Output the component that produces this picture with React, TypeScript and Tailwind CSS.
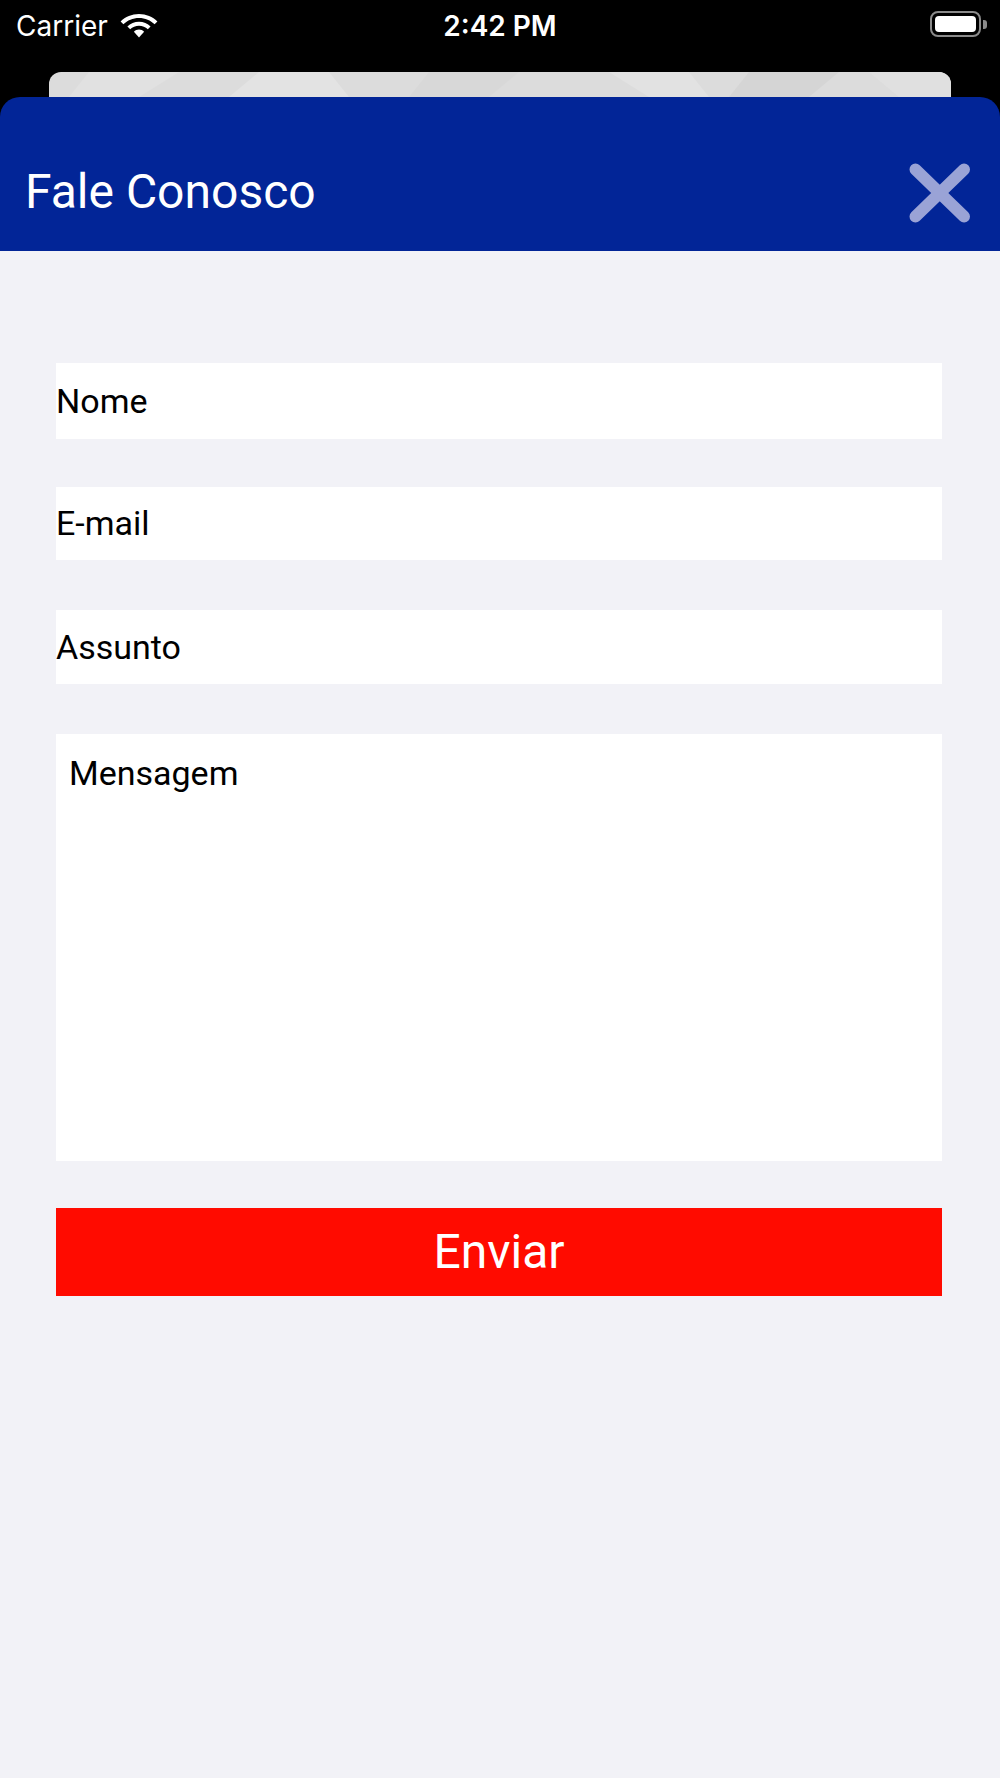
import React from 'react';

const WifiIcon = () => (
  <svg width="38" height="24" viewBox="0 0 38 24" fill="white">
    <path d="M19 0C11.8 0 5.3 2.8 0.6 7.4L3.4 10.2C7.4 6.3 12.9 3.9 19 3.9S30.6 6.3 34.6 10.2L37.4 7.4C32.7 2.8 26.2 0 19 0Z" />
    <path d="M19 7.8C14.5 7.8 10.4 9.6 7.4 12.5L10.2 15.3C12.5 13.1 15.6 11.7 19 11.7S25.5 13.1 27.8 15.3L30.6 12.5C27.6 9.6 23.5 7.8 19 7.8Z" />
    <path d="M19 15.6C17 15.6 15.2 16.4 13.9 17.7L19 23.5L24.1 17.7C22.8 16.4 21 15.6 19 15.6Z" />
  </svg>
);

const Battery = () => (
  <div className="flex items-center">
    <div className="w-[51px] h-[26px] rounded-[8px] border-[2px] border-[#8a8a8a] p-[3px]">
      <div className="w-full h-full rounded-[4px] bg-white" />
    </div>
    <div className="w-[4px] h-[9px] rounded-r-[3px] bg-[#8a8a8a] ml-[2px]" />
  </div>
);

const CloseIcon = () => (
  <svg width="62" height="60" viewBox="0 0 62 60" aria-label="Fechar">
    <g stroke="#9aa3d6" strokeWidth="12" strokeLinecap="round">
      <line x1="6.5" y1="6.5" x2="55" y2="53.5" />
      <line x1="55" y1="6.5" x2="6.5" y2="53.5" />
    </g>
  </svg>
);

const CardTexture = () => (
  <svg className="w-full h-full" viewBox="0 0 902 25" preserveAspectRatio="none">
    <rect width="902" height="25" fill="#dcdcdc" />
    <polygon points="40,0 130,0 90,25 20,25" fill="#e1e1e1" />
    <polygon points="210,0 280,0 300,25 180,25" fill="#e3e3e3" />
    <polygon points="380,0 470,0 440,25 360,25" fill="#d8d8d8" />
    <polygon points="560,0 640,0 660,25 600,25" fill="#e2e2e2" />
    <polygon points="700,0 790,0 760,25 680,25" fill="#d5d5d5" />
    <polygon points="820,0 902,0 902,25 850,25" fill="#e0e0e0" />
  </svg>
);

const fields = [
  { label: 'Nome', h: 'h-[76px]', mt: 'mt-0' },
  { label: 'E-mail', h: 'h-[73px]', mt: 'mt-[48px]' },
  { label: 'Assunto', h: 'h-[74px]', mt: 'mt-[50px]' },
];

export default function App() {
  return (
    <div className="w-[1000px] h-[1778px] bg-black flex flex-col overflow-hidden">
      {/* status bar */}
      <div className="relative h-[72px] shrink-0 text-white font-['Inter',sans-serif]">
        <div className="absolute left-[16px] top-[7px] flex items-center gap-[12px]">
          <span className="text-[28px] leading-[38px]">Carrier</span>
          <WifiIcon />
        </div>
        <div className="absolute left-0 right-0 top-[7px] text-center text-[28px] leading-[38px] font-semibold">
          2:42 PM
        </div>
        <div className="absolute right-[13px] top-[11px]">
          <Battery />
        </div>
      </div>

      {/* sheet behind */}
      <div className="mx-[49px] h-[25px] shrink-0 rounded-t-[12px] overflow-hidden">
        <CardTexture />
      </div>

      {/* header */}
      <div className="h-[154px] shrink-0 bg-[#022597] rounded-t-[20px] flex items-center justify-between pl-[25px] pr-[29px] pt-[38px] font-['Roboto',sans-serif]">
        <h1 className="text-white text-[48px] leading-none mb-[3px]">Fale Conosco</h1>
        <CloseIcon />
      </div>

      {/* form */}
      <div className="flex-1 bg-[#f2f2f7] pl-[56px] pr-[58px] pt-[112px] font-['Roboto',sans-serif]">
        {fields.map(f => (
          <div key={f.label} className={`${f.h} ${f.mt} bg-white flex items-center`}>
            <span className="text-[34px] text-black">{f.label}</span>
          </div>
        ))}
        <div className="mt-[50px] h-[427px] bg-white pl-[13px] pt-[14px]">
          <span className="text-[34px] text-black">Mensagem</span>
        </div>
        <button className="mt-[47px] w-full h-[88px] bg-[#ff0b00] flex items-center justify-center">
          <span className="text-white text-[48px] leading-none">Enviar</span>
        </button>
      </div>
    </div>
  );
}
